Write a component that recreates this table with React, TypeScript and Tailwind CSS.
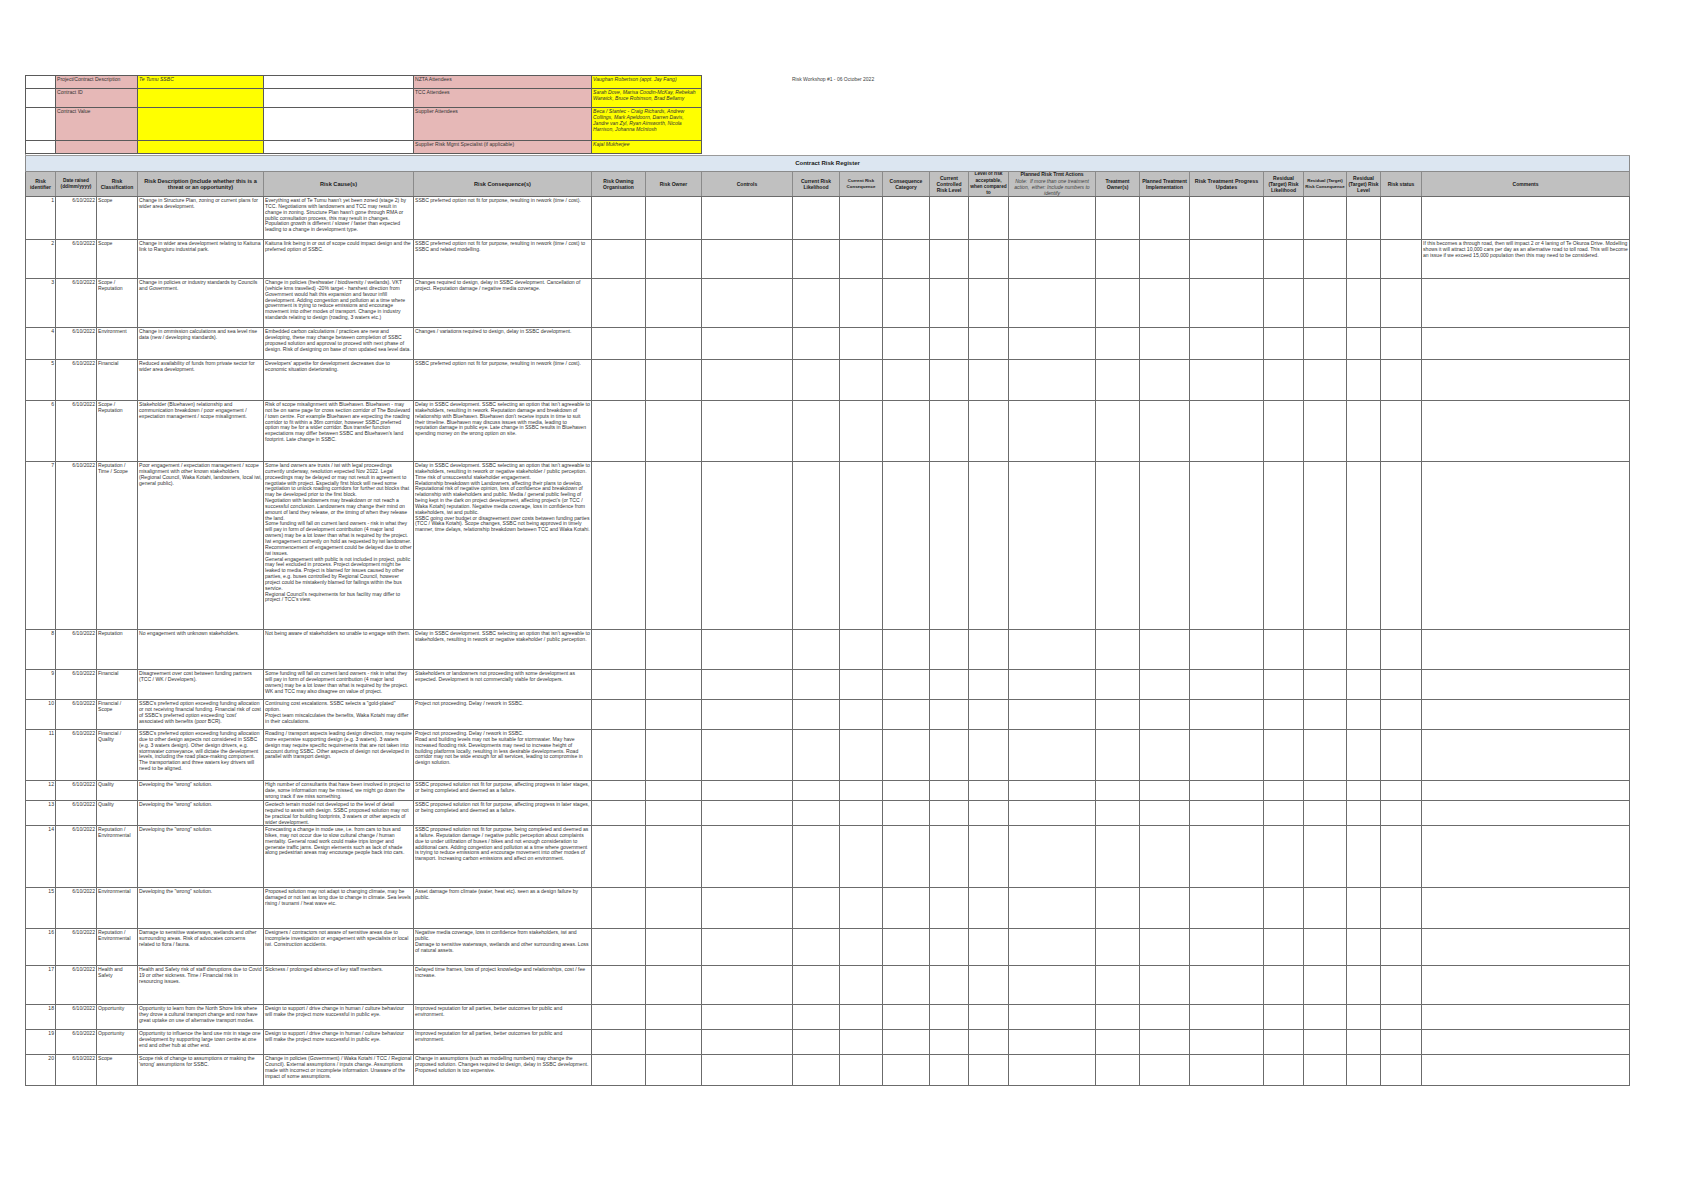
import React from 'react'

const COLS =
  'grid-cols-[30px_41px_41px_126px_150px_178px_54px_56px_91px_47px_43px_47px_39px_40px_87px_44px_50px_74px_40px_43px_34px_41px_208px]'

type Risk = {
  h: string
  cls: string
  desc: string
  cause: string
  cons: string
  comment?: string
}

const WRONG = 'Developing the "wrong" solution.'
const FAIL = 'SSBC proposed solution not fit for purpose, affecting progress in later stages, or being completed and deemed as a failure.'
const REWORK = 'SSBC preferred option not fit for purpose, resulting in rework (time / cost).'
const BEHAVIOUR = 'Design to support / drive change in human / culture behaviour will make the project more successful in public eye.'
const REPUTATION = 'Improved reputation for all parties, better outcomes for public and environment.'

const risks: Risk[] = [
  {
    h: 'h-[43px]',
    cls: 'Scope',
    desc: 'Change in Structure Plan, zoning or current plans for wider area development.',
    cause:
      "Everything east of Te Tumu hasn't yet been zoned (stage 2) by TCC.  Negotiations with landowners and TCC may result in change in zoning. Structure Plan hasn't gone through RMA or public consultation process, this may result in changes. Population growth is different / slower / faster than expected leading to a change in development type.",
    cons: REWORK,
  },
  {
    h: 'h-[39px]',
    cls: 'Scope',
    desc: 'Change in wider area development relating to Kaituna link to Rangiuru industrial park.',
    cause: 'Kaituna link being in or out of scope could impact design and the preferred option of SSBC.',
    cons: 'SSBC preferred option not fit for purpose, resulting in rework (time / cost) to SSBC and related modelling.',
    comment:
      'If this becomes a through road, then will impact 2 or 4 laning of Te Okuroa Drive. Modelling shows it will attract 10,000 cars per day as an alternative road to toll road. This will become an issue if we exceed 15,000 population then this may need to be considered.',
  },
  {
    h: 'h-[49px]',
    cls: 'Scope / Reputation',
    desc: 'Change in policies or industry standards by Councils and Government.',
    cause:
      'Change in policies (freshwater / biodiversity / wetlands).  VKT (vehicle kms travelled) -20% target - harshest direction from Government would halt this expansion and favour infill development.  Adding congestion and pollution at a time where government is trying to reduce emissions and encourage movement into other modes of transport.  Change in industry standards relating to design (roading, 3 waters etc.)',
    cons: 'Changes required to design, delay in SSBC development.  Cancellation of project.  Reputation damage / negative media coverage.',
  },
  {
    h: 'h-[32px]',
    cls: 'Environment',
    desc: 'Change in ommission calculations and sea level rise data (new / developing standards).',
    cause:
      'Embedded carbon calculations / practices are new and developing, these may change between completion of SSBC proposed solution and approval to proceed with next phase of design.  Risk of designing on base of non updated sea level data.',
    cons: 'Changes / variations required to design, delay in SSBC development.',
  },
  {
    h: 'h-[41px]',
    cls: 'Financial',
    desc: 'Reduced availability of funds from private sector for wider area development.',
    cause: "Developers' appetite for development decreases due to economic situation deteriorating.",
    cons: REWORK,
  },
  {
    h: 'h-[61px]',
    cls: 'Scope / Reputation',
    desc: 'Stakeholder (Bluehaven) relationship and communication breakdown / poor engagement / expectation management / scope misalignment.',
    cause:
      "Risk of scope misalignment with Bluehaven.  Bluehaven - may not be on same page for cross section corridor of The Boulevard / town centre.  For example Bluehaven are expecting the roading corridor to fit within a 36m corridor, however SSBC preferred option may be for a wider corridor.  Bus transfer function expectations may differ between SSBC and Bluehaven's land footprint. Late change in SSBC.",
    cons:
      "Delay in SSBC development.  SSBC selecting an option that isn't agreeable to stakeholders, resulting in rework.  Reputation damage and breakdown of relationship with Bluehaven.  Bluehaven don't receive inputs in time to suit their timeline.  Bluehaven may discuss issues with media, leading to reputation damage in public eye. Late change in SSBC results in Bluehaven spending money on the wrong option on site.",
  },
  {
    h: 'h-[168px]',
    cls: 'Reputation / Time / Scope',
    desc: 'Poor engagement / expectation management / scope misalignment with other known stakeholders (Regional Council, Waka Kotahi, landowners, local iwi, general public).',
    cause: `Some land owners are trusts / iwi with legal proceedings currently underway, resolution expected Nov 2022.  Legal proceedings may be delayed or may not result in agreement to negotiate with project.  Especially first block will need some negotiation to unlock roading corridors for further out blocks that may be developed prior to the first block.
Negotiation with landowners may breakdown or not reach a successful conclusion.  Landowners may change their mind on amount of land they release, or the timing of when they release the land.
Some funding will fall on current land owners - risk in what they will pay in form of development contribution (4 major land owners) may be a lot lower than what is required by the project.
Iwi engagement currently on hold as requested by iwi landowner.  Recommencement of engagement could be delayed due to other iwi issues.
General engagement with public is not included in project, public may feel excluded in process.  Project development might be leaked to media.  Project is blamed for issues caused by other parties, e.g. buses controlled by Regional Council, however project could be mistakenly blamed for failings within the bus service.
Regional Council's requirements for bus facility may differ to project / TCC's view.`,
    cons: `Delay in SSBC development.  SSBC selecting an option that isn't agreeable to stakeholders, resulting in rework or negative stakeholder / public perception.  Time risk of unsuccessful stakeholder engagement.
Relationship breakdown with Landowners, affecting their plans to develop.
Reputational risk of negative opinion, loss of confidence and breakdown of relationship with stakeholders and public.  Media / general public feeling of being kept in the dark on project development, affecting project's (or TCC / Waka Kotahi) reputation.  Negative media coverage, loss in confidence from stakeholders, iwi and public.
SSBC going over budget or disagreement over costs between funding parties (TCC / Waka Kotahi).  Scope changes, SSBC not being approved in timely manner, time delays, relationship breakdown between TCC and Waka Kotahi.`,
  },
  {
    h: 'h-[40px]',
    cls: 'Reputation',
    desc: 'No engagement with unknown stakeholders.',
    cause: 'Not being aware of stakeholders so unable to engage with them.',
    cons: "Delay in SSBC development.  SSBC selecting an option that isn't agreeable to stakeholders, resulting in rework or negative stakeholder / public perception.",
  },
  {
    h: 'h-[30px]',
    cls: 'Financial',
    desc: 'Disagreement over cost between funding partners (TCC / WK / Developers).',
    cause:
      'Some funding will fall on current land owners - risk in what they will pay in form of development contribution (4 major land owners) may be a lot lower than what is required by the project.  WK and TCC may also disagree on value of project.',
    cons: 'Stakeholders or landowners not proceeding with some development as expected.  Development is not commercially viable for developers.',
  },
  {
    h: 'h-[30px]',
    cls: 'Financial / Scope',
    desc: "SSBC's preferred option exceeding funding allocation or not receiving financial funding.  Financial risk of cost of SSBC's preferred option exceeding 'cost' associated with benefits (poor BCR).",
    cause: `Continuing cost escalations.  SSBC selects a "gold-plated" option.
Project team miscalculates the benefits, Waka Kotahi may differ in their calculations.`,
    cons: 'Project not proceeding.  Delay / rework in SSBC.',
  },
  {
    h: 'h-[51px]',
    cls: 'Financial / Quality',
    desc: "SSBC's preferred option exceeding funding allocation due to other design aspects not considered in SSBC (e.g. 3 waters design). Other design drivers, e.g. stormwater conveyance, will dictate the development levels, including the road place-making component. The transportation and three waters key drivers will need to be aligned.",
    cause:
      'Roading / transport aspects leading design direction, may require more expensive supporting design (e.g. 3 waters).  3 waters design may require specific requirements that are not taken into account during SSBC.  Other aspects of design not developed in parallel with transport design.',
    cons: `Project not proceeding.  Delay / rework in SSBC.
Road and building levels may not be suitable for stormwater.  May have increased flooding risk.  Developments may need to increase height of building platforms locally, resulting in less desirable developments.  Road corridor may not be wide enough for all services, leading to compromise in design solution.`,
  },
  {
    h: 'h-[20px]',
    cls: 'Quality',
    desc: WRONG,
    cause:
      'High number of consultants that have been involved in project to date, some information may be missed, we might go down the wrong track if we miss something.',
    cons: FAIL,
  },
  {
    h: 'h-[25px]',
    cls: 'Quality',
    desc: WRONG,
    cause:
      'Geotech terrain model not developed to the level of detail required to assist with design.  SSBC proposed solution may not be practical for building footprints, 3 waters or other aspects of wider development.',
    cons: FAIL,
  },
  {
    h: 'h-[62px]',
    cls: 'Reputation / Environmental',
    desc: WRONG,
    cause:
      'Forecasting a change in mode use, i.e. from cars to bus and bikes, may not occur due to slow cultural change / human mentality.  General road work could make trips longer and generate traffic jams.  Design elements such as lack of shade along pedestrian areas may encourage people back into cars.',
    cons:
      'SSBC proposed solution not fit for purpose, being completed and deemed as a failure.  Reputation damage / negative public perception about complaints due to under utilization of buses / bikes and not enough consideration to additional cars.  Adding congestion and pollution at a time where government is trying to reduce emissions and encourage movement into other modes of transport.  Increasing carbon emissions and affect on environment.',
  },
  {
    h: 'h-[41px]',
    cls: 'Environmental',
    desc: WRONG,
    cause:
      'Proposed solution may not adapt to changing climate, may be damaged or not last as long due to change in climate.  Sea levels rising / tsunami / heat wave etc.',
    cons: 'Asset damage from climate (water, heat etc). seen as a design failure by public.',
  },
  {
    h: 'h-[37px]',
    cls: 'Reputation / Environmental',
    desc: 'Damage to sensitive waterways, wetlands and other surrounding areas.  Risk of  advocates concerns related to flora / fauna.',
    cause:
      'Designers / contractors not aware of sensitive areas due to incomplete investigation or engagement with specialists or local iwi.  Construction accidents.',
    cons: `Negative media coverage, loss in confidence from stakeholders, iwi and public.
Damage to sensitive waterways, wetlands and other surrounding areas.  Loss of natural assets.`,
  },
  {
    h: 'h-[39px]',
    cls: 'Health and Safety',
    desc: 'Health and Safety risk of staff disruptions due to Covid 19 or other sickness.  Time / Financial risk in resourcing issues.',
    cause: 'Sickness / prolonged absence of key staff members.',
    cons: 'Delayed time frames, loss of project knowledge and relationships, cost / fee increase.',
  },
  {
    h: 'h-[25px]',
    cls: 'Opportunity',
    desc: 'Opportunity to learn from the North Shore link where they drove a cultural transport change and now have great uptake on use of alternative transport modes.',
    cause: BEHAVIOUR,
    cons: REPUTATION,
  },
  {
    h: 'h-[25px]',
    cls: 'Opportunity',
    desc: 'Opportunity to influence the land use mix in stage one development by supporting large town centre at one end and other hub at other end.',
    cause: BEHAVIOUR,
    cons: REPUTATION,
  },
  {
    h: 'h-[31px]',
    cls: 'Scope',
    desc: "Scope risk of change to assumptions or making the 'wrong' assumptions for SSBC.",
    cause:
      'Change in policies (Government) / Waka Kotahi / TCC / Regional Council).  External assumptions / inputs change.  Assumptions made with incorrect or incomplete information.  Unaware of the impact of some assumptions.',
    cons: 'Change in assumptions (such as modelling numbers) may change the proposed solution.  Changes required to design, delay in SSBC development.  Proposed solution is too expensive.',
  },
]

const headers: { label: React.ReactNode; size?: string }[] = [
  { label: 'Risk identifier' },
  { label: 'Date raised (dd/mm/yyyy)', size: 'text-[4.8px]' },
  { label: 'Risk Classification' },
  { label: 'Risk Description (include whether this is a threat or an opportunity)', size: 'text-[5.6px]' },
  { label: 'Risk Cause(s)', size: 'text-[5.6px]' },
  { label: 'Risk Consequence(s)', size: 'text-[5.6px]' },
  { label: 'Risk Owning Organisation' },
  { label: 'Risk Owner' },
  { label: 'Controls' },
  { label: 'Current Risk Likelihood' },
  { label: 'Current Risk Consequence', size: 'text-[4.4px]' },
  { label: 'Consequence Category' },
  { label: 'Current Controlled Risk Level' },
  { label: 'Level of risk acceptable, when compared to', size: 'text-[4.8px]' },
  {
    label: (
      <>
        Planned Risk Trmt Actions
        <br />
        <span className="font-normal italic text-[#404040]">
          Note:&nbsp; If more than one treatment action,&nbsp; either: Include numbers to identify
        </span>
      </>
    ),
    size: 'text-[5px]',
  },
  { label: 'Treatment Owner(s)' },
  { label: 'Planned Treatment Implementation' },
  { label: 'Risk Treatment Progress Updates', size: 'text-[5.4px]' },
  { label: 'Residual (Target) Risk Likelihood' },
  { label: 'Residual (Target) Risk Consequence', size: 'text-[4.4px]' },
  { label: 'Residual (Target) Risk Level' },
  { label: 'Risk status' },
  { label: 'Comments' },
]

const info = [
  { h: 'h-[13px]', label: 'Project/Contract Description', value: 'Te Tumu SSBC', label2: 'NZTA Attendees', value2: 'Vaughan Robertson (appt. Jay Fang)' },
  {
    h: 'h-[19px]',
    label: 'Contract ID',
    value: '',
    label2: 'TCC Attendees',
    value2: 'Sarah Dove, Marisa Coodin-McKay, Rebekah Warwick, Bruce Robinson, Brad Bellamy',
  },
  {
    h: 'h-[33px]',
    label: 'Contract Value',
    value: '',
    label2: 'Supplier Attendees',
    value2:
      'Beca / Stantec - Craig Richards, Andrew Collings, Mark Apeldoorn, Darren Davis, Jandre van Zyl, Ryan Ainsworth, Nicola Harrison, Johanna McIntosh',
  },
  { h: 'h-[13px]', label: '', value: '', label2: 'Supplier Risk Mgmt Specialist (if applicable)', value2: 'Kajal Mukherjee' },
]

function InfoTable() {
  return (
    <div className="w-[677px] border-l border-t border-[#5a5a5a]">
      {info.map((r, i) => (
        <div key={i} className={`grid grid-cols-[30px_82px_126px_150px_178px_110px] border-b border-[#5a5a5a] ${r.h}`}>
          <div className="border-r border-[#5a5a5a] bg-white" />
          <div className="border-r border-[#5a5a5a] bg-[#e6b8b7] px-[1px] pt-[1px]">{r.label}</div>
          <div className="border-r border-[#5a5a5a] bg-[#ffff00] px-[1px] pt-[1px] italic">{r.value}</div>
          <div className="border-r border-[#5a5a5a] bg-white" />
          <div className="border-r border-[#5a5a5a] bg-[#e6b8b7] px-[1px] pt-[1px]">{r.label2}</div>
          <div className="border-r border-[#5a5a5a] bg-[#ffff00] px-[1px] pt-[1px] italic">{r.value2}</div>
        </div>
      ))}
    </div>
  )
}

function HeaderRow() {
  return (
    <div className={`grid ${COLS} h-[25px] border-b border-l border-[#6b6b6b] bg-[#c0c0c0]`}>
      {headers.map((c, i) => (
        <div
          key={i}
          className={`flex items-center justify-center overflow-hidden border-r border-[#8a8a8a] px-[1px] text-center font-bold leading-[6.3px] text-[#1a1a1a] ${c.size ?? 'text-[5px]'}`}
        >
          <div>{c.label}</div>
        </div>
      ))}
    </div>
  )
}

function RiskRow({ r, n }: { r: Risk; n: number }) {
  const cell = 'overflow-hidden border-r border-[#6b6b6b] px-[1px] pt-[1px] whitespace-pre-line'
  return (
    <div className={`grid ${COLS} ${r.h} border-b border-l border-[#6b6b6b] bg-white`}>
      <div className={`${cell} text-right`}>{n}</div>
      <div className={`${cell} text-right`}>6/10/2022</div>
      <div className={cell}>{r.cls}</div>
      <div className={cell}>{r.desc}</div>
      <div className={cell}>{r.cause}</div>
      <div className={cell}>{r.cons}</div>
      {Array.from({ length: 16 }).map((_, i) => (
        <div key={i} className={cell} />
      ))}
      <div className={cell}>{r.comment ?? ''}</div>
    </div>
  )
}

export default function App() {
  return (
    <main className="min-h-screen bg-white pl-[25px] pt-[75px] font-['Liberation_Sans',Arial,sans-serif] text-[5.1px] leading-[5.85px] text-[#333333]">
      <div className="flex items-start">
        <InfoTable />
        <div className="ml-[90px] pt-[2px] text-[5px] text-[#404040]">Risk Workshop #1 - 06 October 2022</div>
      </div>

      <div className="h-[2px] w-[1605px] border-b border-l border-[#9a9a9a]" />

      <div className="flex h-[16px] w-[1605px] items-center justify-center border-x border-b border-[#8a8a8a] bg-[#dce6f1] text-[6px] font-bold text-[#1a1a1a]">
        Contract Risk Register
      </div>

      <div className="w-[1605px]">
        <HeaderRow />
        {risks.map((r, i) => (
          <RiskRow key={i} r={r} n={i + 1} />
        ))}
      </div>
    </main>
  )
}
